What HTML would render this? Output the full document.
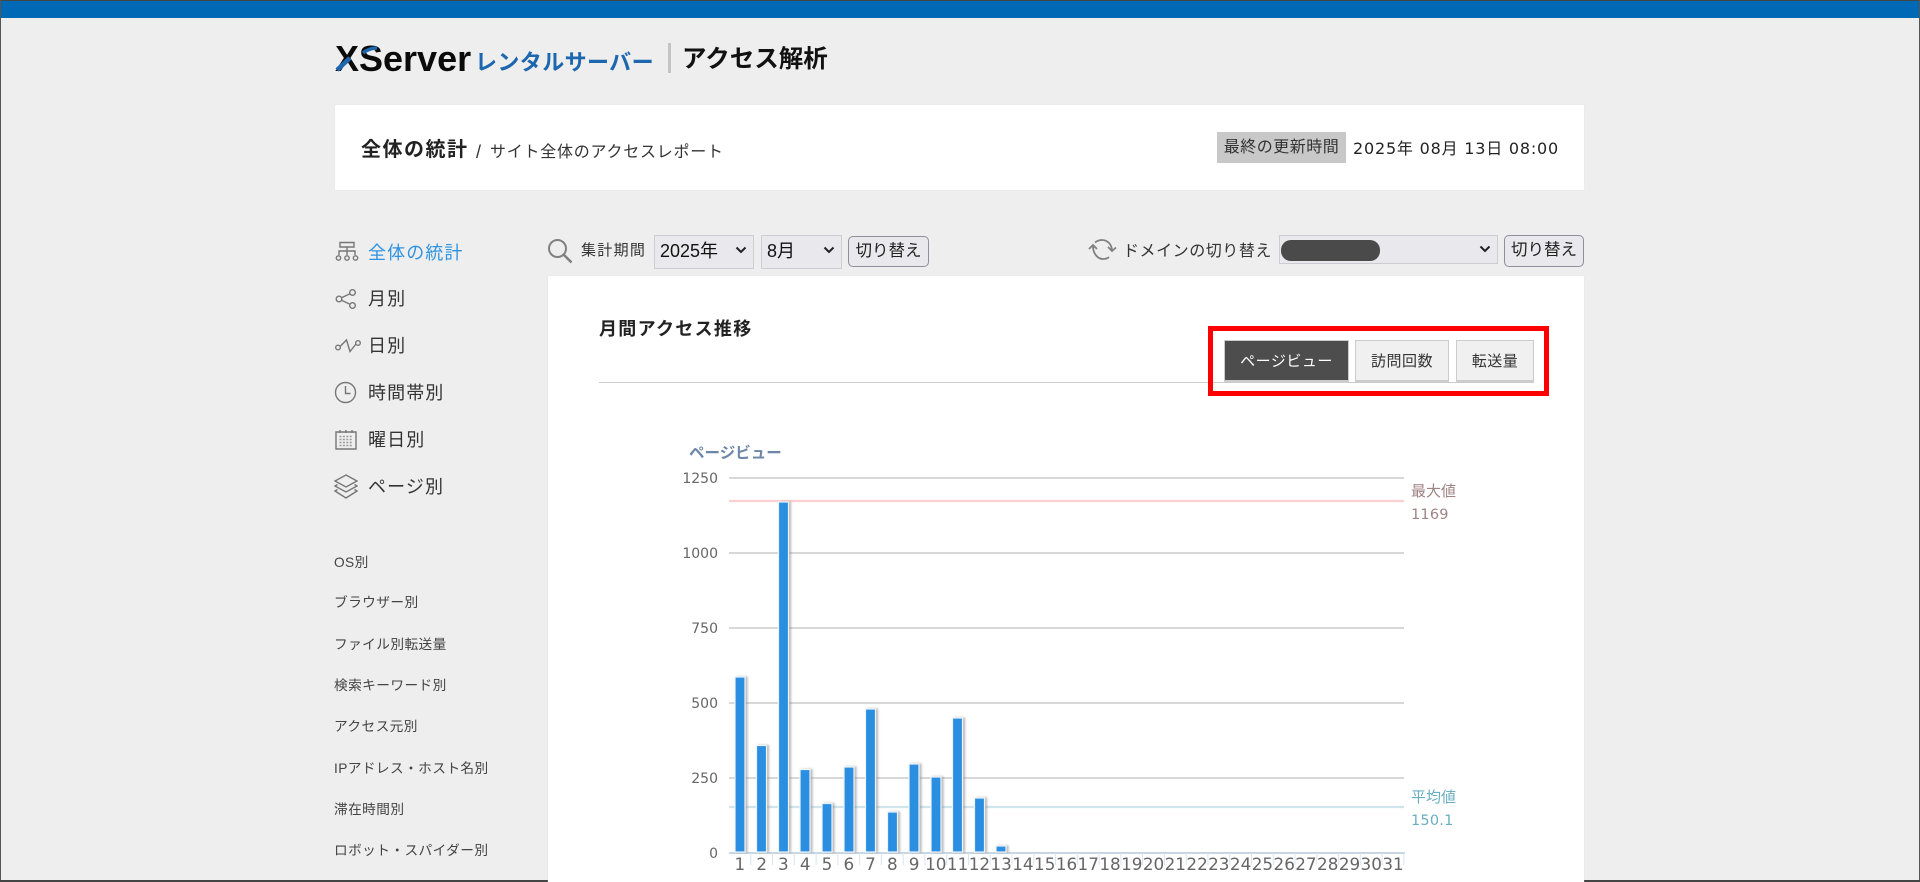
<!DOCTYPE html>
<html lang="ja"><head><meta charset="utf-8"><title>全体の統計</title>
<style>
html,body{margin:0;padding:0;background:#eee}
#p{position:relative;width:1920px;height:882px;overflow:hidden;background:#eee;font-family:"Liberation Sans","Noto Sans CJK JP",sans-serif;color:#333}
#p div,#p span.a{position:absolute;white-space:nowrap}
.side{left:368px;font-size:18px;letter-spacing:1.1px;line-height:26px;height:26px;color:#333}
.sub{left:334px;font-size:13.7px;letter-spacing:.4px;line-height:20px;height:20px;color:#444}
.sel{background:#e9e9ed;border:1.5px solid #ccccd2;box-sizing:border-box;font-size:18px;color:#111;line-height:30px}
.btn{background:#e9e9ed;border:1px solid #8f8f9d;border-radius:5px;box-sizing:border-box;font-size:16.500px;color:#222;line-height:29px;text-align:center}
.tab{background:#f0f0f0;border:1px solid #ccc;border-bottom:2px solid #ccc;box-sizing:border-box;font-size:15px;letter-spacing:.5px;line-height:42px;text-align:center;color:#333}
.ic{position:absolute;fill:none;stroke:#777;stroke-width:1.4}
svg text{font-family:"DejaVu Sans","Noto Sans CJK JP",sans-serif}
</style></head><body><div id="p">
<div style="left:0;top:0;width:1920px;height:1px;background:#444"></div>
<div style="left:0;top:1px;width:1920px;height:17px;background:#0069b5"></div>
<div style="left:0;top:0;width:1px;height:882px;background:#555"></div>
<div style="right:0;top:0;width:1px;height:882px;background:#555"></div>
<div style="left:0;top:880px;width:1920px;height:2px;background:#444"></div>

<div style="left:335px;top:40px;font-size:36px;font-weight:700;line-height:38px;letter-spacing:0;color:#0b0b0b">XServer</div>
<svg style="position:absolute;left:330px;top:40px" width="60" height="36"><path d="M7 30 20 18" stroke="#1d67ae" stroke-width="4.500" fill="none"/><path d="M33 13C38 9 42 8 47 8" stroke="#1d67ae" stroke-width="3.500" fill="none"/></svg>
<div style="left:475px;top:47px;font-size:22px;font-weight:700;line-height:32px;letter-spacing:.4px;color:#1d67ae">レンタルサーバー</div>
<div style="left:668px;top:43px;width:3px;height:30px;background:#c4c4c4"></div>
<div style="left:682px;top:44px;font-size:24.500px;font-weight:700;line-height:32px;color:#111">アクセス解析</div>

<div style="left:335px;top:105px;width:1249px;height:85px;background:#fff;box-shadow:0 0 1px #ddd"></div>
<div style="left:361px;top:135px;font-size:20px;font-weight:700;letter-spacing:1.500px;line-height:30px;color:#222">全体の統計</div>
<div style="left:476px;top:138px;font-size:18px;line-height:28px;color:#333">/</div>
<div style="left:490px;top:139px;font-size:16px;letter-spacing:.75px;line-height:28px;color:#333">サイト全体のアクセスレポート</div>
<div style="left:1217px;top:132px;width:129px;height:31px;background:#c8c8c8;font-size:16px;letter-spacing:.5px;line-height:31px;text-align:center;color:#333">最終の更新時間</div>
<div style="left:1353px;top:135px;font-family:'DejaVu Sans','Noto Sans CJK JP',sans-serif;font-size:16px;letter-spacing:.8px;line-height:28px;color:#222">2025年 08月 13日 08:00</div>

<svg class="ic" style="left:335px;top:241px" width="24" height="21" viewBox="0 0 24 21"><path d="M5 1.500H19V6H5ZM12 6V14M4 14V10H20V14"/><circle cx="3.500" cy="17" r="2.200"/><circle cx="12" cy="17" r="2.200"/><circle cx="20.500" cy="17" r="2.200"/></svg>
<div class="side" style="top:240px;color:#2e93e0">全体の統計</div>
<svg class="ic" style="left:335px;top:288px" width="22" height="22" viewBox="0 0 22 22"><circle cx="4" cy="11" r="2.800"/><circle cx="17.500" cy="4.500" r="2.800"/><circle cx="17.500" cy="17.500" r="2.800"/><path d="M6.500 9.700 15 5.700M6.500 12.300 15 16.300"/></svg>
<div class="side" style="top:286px">月別</div>
<svg class="ic" style="left:334px;top:336px" width="28" height="20" viewBox="0 0 28 20"><circle cx="4" cy="11.500" r="2.300"/><circle cx="24" cy="7" r="2.300"/><path d="M6 10.500 12.500 4 16 15.500 22 8"/></svg>
<div class="side" style="top:333px">日別</div>
<svg class="ic" style="left:334px;top:381px" width="23" height="23" viewBox="0 0 23 23"><circle cx="11.500" cy="11.500" r="10"/><path d="M11.500 5V12.500H16.500"/></svg>
<div class="side" style="top:380px">時間帯別</div>
<svg class="ic" style="left:335px;top:429px" width="22" height="21" viewBox="0 0 22 21"><path d="M1 3H21V20H1ZM5 1V4M11 1V4M17 1V4"/><path d="M4.500 7.500H17.500M4.500 10.500H17.500M4.500 13.500H17.500M4.500 16.500H17.500" stroke-dasharray="2 1.400" stroke="#999"/></svg>
<div class="side" style="top:427px">曜日別</div>
<svg class="ic" style="left:334px;top:474px" width="24" height="26" viewBox="0 0 24 26"><path d="M12 1 23 7 12 13 1 7Z"/><path d="M3.500 10.500 1 12 12 18 23 12 20.500 10.500"/><path d="M3.500 15.500 1 17 12 24 23 17 20.500 15.500"/></svg>
<div class="side" style="top:474px">ページ別</div>

<div class="sub" style="top:553px">OS別</div>
<div class="sub" style="top:593px">ブラウザー別</div>
<div class="sub" style="top:635px">ファイル別転送量</div>
<div class="sub" style="top:676px">検索キーワード別</div>
<div class="sub" style="top:717px">アクセス元別</div>
<div class="sub" style="top:759px">IPアドレス・ホスト名別</div>
<div class="sub" style="top:800px">滞在時間別</div>
<div class="sub" style="top:841px">ロボット・スパイダー別</div>

<svg class="ic" style="left:547px;top:238px;stroke:#808080;stroke-width:2" width="26" height="26" viewBox="0 0 26 26"><circle cx="10.500" cy="10.500" r="8.500"/><path d="M16.500 16.500 24.500 24.500" stroke-width="2.600"/></svg>
<div style="left:581px;top:238px;font-size:15px;letter-spacing:1.300px;line-height:26px;color:#333">集計期間</div>
<div class="sel" style="left:654px;top:235px;width:100px;height:34px;padding-left:5px">2025年</div>
<svg class="ic" style="left:735px;top:244px;stroke:#222;stroke-width:2" width="12" height="12"><path d="M1.500 3.500 6 8 10.500 3.500"/></svg>
<div class="sel" style="left:761px;top:235px;width:81px;height:34px;padding-left:5px">8月</div>
<svg class="ic" style="left:823px;top:244px;stroke:#222;stroke-width:2" width="12" height="12"><path d="M1.500 3.500 6 8 10.500 3.500"/></svg>
<div class="btn" style="left:848px;top:236px;width:81px;height:31px">切り替え</div>

<svg class="ic" style="left:1088px;top:238px;stroke:#808080;stroke-width:1.800" width="29" height="23" viewBox="0 0 29 23"><path d="M5 8C5 16 10 21 15 21 18 21 20 20 21 19M24 13C24 6 19 2 14 2 11 2 9 3 7 4.500"/><path d="M1 11 5 7 9 11M20 9 24 13 28 9.500"/></svg>
<div style="left:1123px;top:238px;font-size:16px;letter-spacing:.55px;line-height:28px;color:#333">ドメインの切り替え</div>
<div class="sel" style="left:1279px;top:235px;width:219px;height:29px"></div>
<div style="left:1281px;top:240px;width:99px;height:21px;border-radius:10px;background:#4a4a4a"></div>
<svg class="ic" style="left:1479px;top:243px;stroke:#222;stroke-width:2" width="12" height="12"><path d="M1.500 3.500 6 8 10.500 3.500"/></svg>
<div class="btn" style="left:1504px;top:235px;width:80px;height:32px">切り替え</div>

<div style="left:548px;top:276px;width:1036px;height:606px;background:#fff;box-shadow:0 0 1px #ddd"></div>
<div style="left:599px;top:315px;font-size:18px;font-weight:700;letter-spacing:1.300px;line-height:28px;color:#222">月間アクセス推移</div>
<div style="left:599px;top:382px;width:935px;height:1px;background:#ccc"></div>
<div class="tab" style="left:1224px;top:340px;width:125px;height:42px;background:#4d4d4d;color:#fff">ページビュー</div>
<div class="tab" style="left:1355px;top:340px;width:94px;height:42px">訪問回数</div>
<div class="tab" style="left:1456px;top:340px;width:78px;height:42px">転送量</div>
<div style="left:1208px;top:326px;width:341px;height:70px;border:5px solid #f00;box-sizing:border-box"></div>

<svg style="position:absolute;left:0;top:0" width="1920" height="882">
<defs><filter id="s" x="-40%" y="-5%" width="200%" height="110%"><feDropShadow dx="2" dy="0" stdDeviation="1" flood-color="#888" flood-opacity=".6"/></filter></defs>
<path d="M729 478H1404M729 553H1404M729 628H1404M729 703H1404M729 778H1404" stroke="#ccc" stroke-width="1.600" fill="none"/>
<path d="M729 501H1404" stroke="#fcd0d0" stroke-width="2.200" fill="none"/>
<path d="M729 807H1404" stroke="#cfe5eb" stroke-width="2.200" fill="none"/>
<path d="M729 853H1405" stroke="#c6d6e4" stroke-width="2" fill="none"/>
<path d="M750.800 853v12M772.500 853v12M794.300 853v12M816.100 853v12M837.900 853v12M859.600 853v12M881.400 853v12M903.200 853v12M924.900 853v12M946.700 853v12M968.500 853v12M990.200 853v12M1012 853v12M1033.800 853v12M1055.600 853v12M1077.300 853v12M1099.100 853v12M1120.900 853v12M1142.600 853v12M1164.400 853v12M1186.200 853v12M1207.900 853v12M1229.700 853v12M1251.500 853v12M1273.300 853v12M1295 853v12M1316.800 853v12M1338.600 853v12M1360.300 853v12M1382.100 853v12M1403.900 853v12" stroke="#d8e4f0" stroke-width="1" fill="none"/>
<g fill="#2a8fe0" stroke="#eef3f8" stroke-width="1.200" filter="url(#s)">
<rect x="735" y="677" width="10" height="175"/>
<rect x="756.500" y="745.500" width="10" height="106.500"/>
<rect x="778.500" y="502" width="10" height="350"/>
<rect x="800" y="769.500" width="10" height="82.500"/>
<rect x="822" y="803.500" width="10" height="48.500"/>
<rect x="844" y="767" width="10" height="85"/>
<rect x="865.500" y="709" width="10" height="143"/>
<rect x="887.500" y="812" width="10" height="40"/>
<rect x="909" y="764" width="10" height="88"/>
<rect x="931" y="777" width="10" height="75"/>
<rect x="952.500" y="718" width="10" height="134"/>
<rect x="974.500" y="798" width="10" height="54"/>
<rect x="996" y="846" width="10" height="6"/>
</g>
<g font-size="14" fill="#666" text-anchor="end">
<text x="718" y="483">1250</text><text x="718" y="558">1000</text><text x="718" y="633">750</text><text x="718" y="708">500</text><text x="718" y="783">250</text><text x="718" y="858">0</text>
</g>
<g font-size="16.800" fill="#666" text-anchor="middle">
<text x="739.900" y="870">1</text><text x="761.700" y="870">2</text><text x="783.400" y="870">3</text><text x="805.200" y="870">4</text><text x="827" y="870">5</text><text x="848.800" y="870">6</text><text x="870.500" y="870">7</text><text x="892.300" y="870">8</text><text x="914.100" y="870">9</text><text x="935.800" y="870">10</text><text x="957.600" y="870">11</text><text x="979.400" y="870">12</text><text x="1001.100" y="870">13</text><text x="1022.900" y="870">14</text><text x="1044.700" y="870">15</text><text x="1066.500" y="870">16</text><text x="1088.200" y="870">17</text><text x="1110" y="870">18</text><text x="1131.800" y="870">19</text><text x="1153.500" y="870">20</text><text x="1175.300" y="870">21</text><text x="1197.100" y="870">22</text><text x="1218.800" y="870">23</text><text x="1240.600" y="870">24</text><text x="1262.400" y="870">25</text><text x="1284.200" y="870">26</text><text x="1305.900" y="870">27</text><text x="1327.700" y="870">28</text><text x="1349.500" y="870">29</text><text x="1371.200" y="870">30</text><text x="1393" y="870">31</text>
</g>
<text x="689" y="458" font-size="15.500" font-weight="700" fill="#6b86a6" style="font-family:'Liberation Sans','Noto Sans CJK JP',sans-serif">ページビュー</text>
<text x="1411" y="496" font-size="15" fill="#a08484" style="font-family:'Liberation Sans','Noto Sans CJK JP',sans-serif">最大値</text>
<text x="1411" y="519" font-size="14.500" fill="#a08484" style="letter-spacing:.2px">1169</text>
<text x="1411" y="802" font-size="15" fill="#6aaec2" style="font-family:'Liberation Sans','Noto Sans CJK JP',sans-serif">平均値</text>
<text x="1411" y="825" font-size="14.500" fill="#6aaec2" style="letter-spacing:.2px">150.1</text>
</svg>
</div></body></html>
